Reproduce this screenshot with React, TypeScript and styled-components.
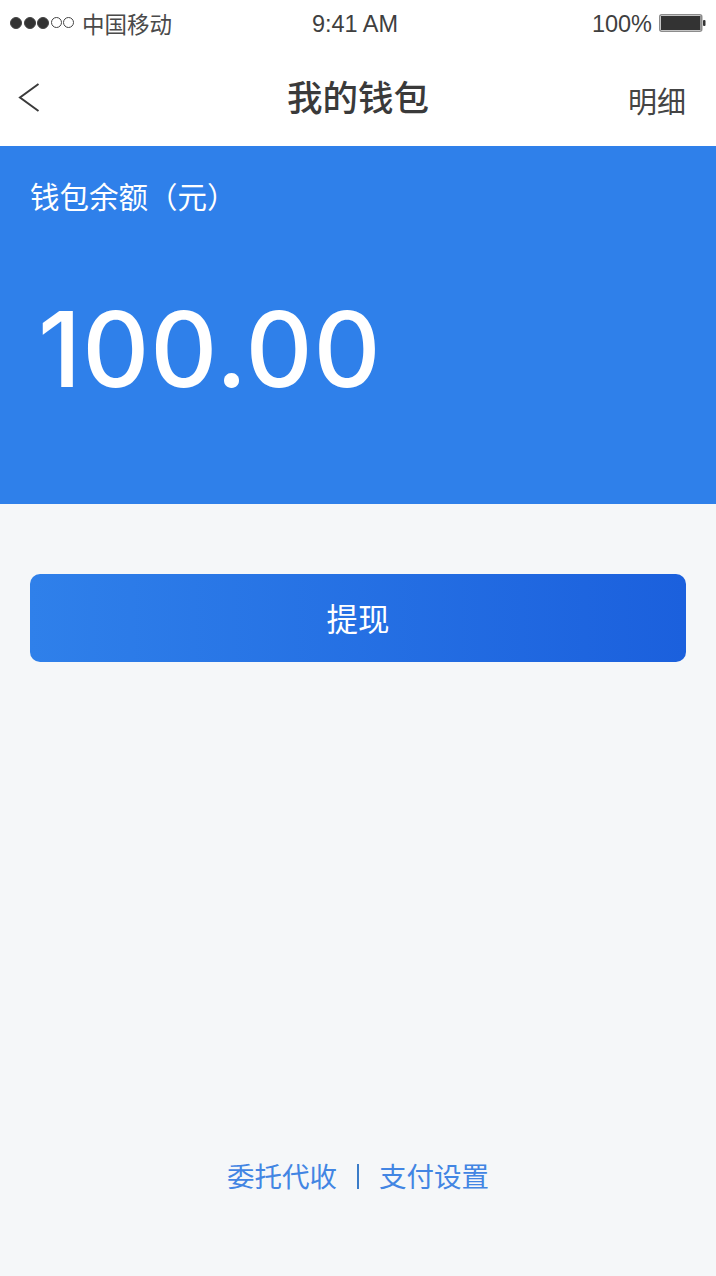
import React from "react";
import styled, { createGlobalStyle } from "styled-components";

const Global = createGlobalStyle`
  html, body { margin: 0; padding: 0; }
  body { font-family: "Liberation Sans", "Noto Sans CJK SC", sans-serif; background: #f5f7f9; }
`;

const cjk = `"Noto Sans CJK SC", "Liberation Sans", sans-serif`;

const Page = styled.div`
  width: 716px;
  height: 1276px;
  display: flex;
  flex-direction: column;
  background: #f5f7f9;
  overflow: hidden;
`;

const Header = styled.header`
  background: #fff;
  height: 146px;
  display: flex;
  flex-direction: column;
`;

const StatusBar = styled.div`
  height: 48px;
  padding: 0 10px;
  display: grid;
  grid-template-columns: 1fr auto 1fr;
  align-items: center;
  color: #3f3f3f;
  font-size: 23.5px;
`;

const Carrier = styled.div`
  display: flex;
  align-items: center;
  gap: 8px;
`;

const CarrierName = styled.span`
  font-family: ${cjk};
  font-weight: 400;
  font-size: 22.5px;
  line-height: 28px;
  margin-top: -2px;
  color: #4a4a4a;
`;

const Signal = styled.div`
  display: flex;
  gap: 1.5px;
  align-items: center;
  margin-top: -3px;
`;

const Dot = styled.span<{ $on: boolean }>`
  width: ${(p) => (p.$on ? 12 : 11)}px;
  height: ${(p) => (p.$on ? 12 : 11)}px;
  box-sizing: border-box;
  border-radius: 50%;
  border: 1px solid #444;
  background: ${(p) => (p.$on ? "#333" : "transparent")};
`;

const Time = styled.span`
  margin-right: 6px;
`;

const BatteryArea = styled.div`
  display: flex;
  justify-content: flex-end;
  align-items: center;
  gap: 7px;
`;

const Battery = styled.svg`
  width: 47px;
  height: 20px;
  margin-top: -3px;
`;

const NavBar = styled.nav`
  flex: 1;
  position: relative;
  display: flex;
  align-items: center;
  justify-content: space-between;
  padding: 0 30px 0 18px;
`;

const BackIcon = styled.svg`
  width: 24px;
  height: 32px;
  margin-top: 2px;
`;

const Title = styled.h1`
  position: absolute;
  left: 0;
  right: 0;
  top: 25px;
  margin: 0;
  text-align: center;
  font: 500 35.5px/46px ${cjk};
  color: #3a3a3a;
`;

const Detail = styled.span`
  font: 400 29px/40px ${cjk};
  color: #444;
  margin-top: 6px;
`;

const Hero = styled.section`
  height: 358px;
  box-sizing: border-box;
  background: #2f80ea;
  color: #fff;
  padding: 26px 30px 0;
`;

const HeroLabel = styled.div`
  font: 400 29.5px/46px ${cjk};
`;

const Amount = styled.div`
  margin-top: 67px;
  margin-left: 8px;
  font: 500 104px/128px "Inter", "Liberation Sans", sans-serif;
  letter-spacing: 1px;
`;

const Main = styled.main`
  flex: 1;
  display: flex;
  flex-direction: column;
  padding: 70px 30px 78px;
`;

const Withdraw = styled.button`
  height: 88px;
  border: 0;
  border-radius: 10px;
  background: linear-gradient(90deg, #2f80ea, #1b60dd);
  color: #fff;
  font: 400 31.5px/40px ${cjk};
  padding: 0 0 3px;
`;

const Links = styled.div`
  margin-top: auto;
  display: flex;
  justify-content: center;
  align-items: center;
  gap: 20px;
`;

const LinkText = styled.a`
  font: 400 27.5px/46px ${cjk};
  color: #4285e3;
`;

const Divider = styled.span`
  width: 2px;
  height: 25px;
  margin-top: 2px;
  background: #3a7cc8;
`;

export default function App() {
  return (
    <Page>
      <Global />
      <Header>
        <StatusBar>
          <Carrier>
            <Signal>
              {[true, true, true, false, false].map((on, i) => (
                <Dot key={i} $on={on} />
              ))}
            </Signal>
            <CarrierName>中国移动</CarrierName>
          </Carrier>
          <Time>9:41 AM</Time>
          <BatteryArea>
            <span>100%</span>
            <Battery viewBox="0 0 47 20">
              <rect x="0.75" y="1.75" width="42" height="16.5" rx="2" fill="none" stroke="#8c8c8c" strokeWidth="1.5" />
              <rect x="2" y="3" width="39.5" height="14" fill="#333" />
              <rect x="44" y="7" width="2.5" height="6" rx="1" fill="#333" />
            </Battery>
          </BatteryArea>
        </StatusBar>
        <NavBar>
          <BackIcon viewBox="0 0 24 32" fill="none" stroke="#3a3a3a" strokeWidth="2">
            <path d="M20.5 2 2 15.5 20.5 29" />
          </BackIcon>
          <Title>我的钱包</Title>
          <Detail>明细</Detail>
        </NavBar>
      </Header>
      <Hero>
        <HeroLabel>钱包余额（元）</HeroLabel>
        <Amount>100.00</Amount>
      </Hero>
      <Main>
        <Withdraw>提现</Withdraw>
        <Links>
          <LinkText>委托代收</LinkText>
          <Divider />
          <LinkText>支付设置</LinkText>
        </Links>
      </Main>
    </Page>
  );
}
